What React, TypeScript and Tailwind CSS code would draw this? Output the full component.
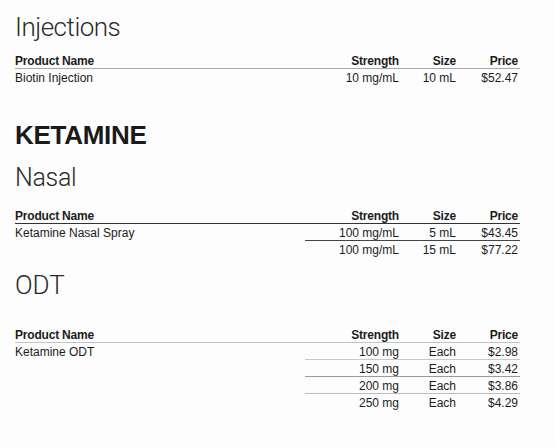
type Row = { name?: string; strength: string; size: string; price: string; rule?: string };

const font = { fontFamily: '"Liberation Sans", Arial, sans-serif' };
const light = { fontFamily: 'Roboto, "Liberation Sans", Arial, sans-serif' };

function PriceTable({ rows, headRule }: { rows: Row[]; headRule: string }) {
  return (
    <div className="w-[505px] text-[12px] text-[#1c1c1c]">
      <div className={`flex h-[16px] border-b ${headRule} font-bold leading-[17px] tracking-[-0.2px]`}>
        <div className="flex-1">Product Name</div>
        <div className="w-[94px] text-right">Strength</div>
        <div className="w-[57px] text-right">Size</div>
        <div className="w-[64px] pr-[2px] text-right">Price</div>
      </div>
      {rows.map((r, i) => {
        const last = i === rows.length - 1;
        return (
          <div key={i} className="flex leading-[18px]">
            <div className="h-[16px] flex-1">{r.name ?? ""}</div>
            <div className={`flex w-[215px] ${last ? "h-[16px]" : `h-[17px] border-b ${r.rule}`}`}>
              <div className="h-[16px] w-[94px] text-right">{r.strength}</div>
              <div className="h-[16px] w-[57px] text-right">{r.size}</div>
              <div className="h-[16px] w-[64px] pr-[2px] text-right">{r.price}</div>
            </div>
          </div>
        );
      })}
    </div>
  );
}

export default function App() {
  return (
    <div className="h-[447px] w-[555px] bg-[#fdfdfd] pl-[15px] pt-[12px]" style={font}>
      <h2 className="h-[30px] text-[26px] font-light leading-[30px] tracking-[-0.5px] text-[#2a2a2a]" style={light}>Injections</h2>
      <div className="mt-[11px]">
        <PriceTable
          headRule="border-[#a8a8a8]"
          rows={[{ name: "Biotin Injection", strength: "10 mg/mL", size: "10 mL", price: "$52.47" }]}
        />
      </div>

      <h1 className="mt-[35px] h-[30px] text-[26px] font-bold leading-[30px] tracking-[-0.3px] text-[#1a1a1a]">KETAMINE</h1>
      <h2 className="mt-[13px] h-[30px] text-[25px] font-light leading-[30px] tracking-[-0.3px] text-[#2a2a2a]" style={light}>Nasal</h2>
      <div className="mt-[15px]">
        <PriceTable
          headRule="border-[#333333]"
          rows={[
            { name: "Ketamine Nasal Spray", strength: "100 mg/mL", size: "5 mL", price: "$43.45", rule: "border-[#444444]" },
            { strength: "100 mg/mL", size: "15 mL", price: "$77.22" },
          ]}
        />
      </div>

      <h2 className="mt-[13px] h-[30px] text-[26px] font-light leading-[30px] text-[#2a2a2a]" style={light}>ODT</h2>
      <div className="mt-[27px]">
        <PriceTable
          headRule="border-[#c4c4c4]"
          rows={[
            { name: "Ketamine ODT", strength: "100 mg", size: "Each", price: "$2.98", rule: "border-[#c8c8c8]" },
            { strength: "150 mg", size: "Each", price: "$3.42", rule: "border-[#9a9a9a]" },
            { strength: "200 mg", size: "Each", price: "$3.86", rule: "border-[#bdbdbd]" },
            { strength: "250 mg", size: "Each", price: "$4.29" },
          ]}
        />
      </div>
    </div>
  );
}
